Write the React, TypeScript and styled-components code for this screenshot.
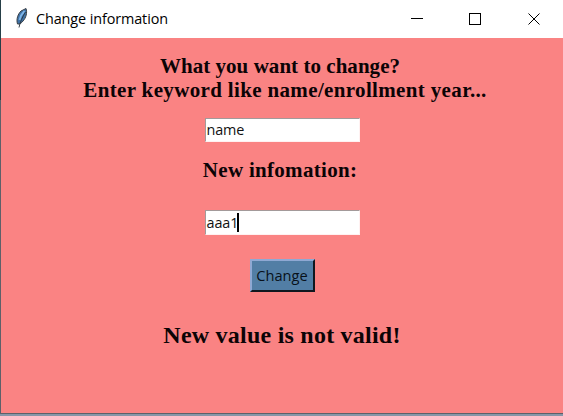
import React from "react";
import styled, { createGlobalStyle } from "styled-components";

const GlobalStyle = createGlobalStyle`
  * { box-sizing: border-box; }
  html, body { margin: 0; padding: 0; overflow: hidden; background: #8795a8; }
`;

const Window = styled.main`
  width: 563px;
  height: 414px;
  display: flex;
  flex-direction: column;
  border-left: 1px solid;
  border-image: linear-gradient(#263f48 0 101px, #5d6069 101px) 1;
  border-bottom: 1px solid #53545c;
`;

const TitleBar = styled.header`
  height: 38px;
  flex: none;
  display: flex;
  align-items: center;
  background: #fff;
  color: #000;
`;

const Feather = styled.svg`
  width: 14px;
  height: 22px;
  margin: 0 7px 2px 14px;
`;

const Title = styled.h1`
  flex: 1;
  margin: 0;
  font: 400 14.4px/20px "Open Sans", "Noto Sans", sans-serif;
  letter-spacing: -0.1px;
  white-space: nowrap;
`;

const WindowButton = styled.button`
  width: 58px;
  height: 38px;
  padding: 0;
  border: 0;
  background: transparent;
  display: flex;
  align-items: center;
  justify-content: center;

  svg { display: block; }
`;

const CloseButton = styled(WindowButton)`
  width: 59px;
  padding-left: 1px;
`;

const Form = styled.section`
  flex: 1;
  display: flex;
  flex-direction: column;
  align-items: center;
  padding-top: 16px;
  background: #fa8383;
  color: #0c0406;
`;

const Label = styled.div<{ $size?: number; $spacing: number; $gap?: number; $left?: number; $right?: number }>`
  font: 700 ${(p) => p.$size ?? 21}px/24px "Liberation Serif", "Times New Roman", serif;
  letter-spacing: ${(p) => p.$spacing}px;
  margin-bottom: ${(p) => p.$gap ?? 0}px;
  padding-left: ${(p) => p.$left ?? 0}px;
  padding-right: ${(p) => p.$right ?? 0}px;
  white-space: nowrap;
`;

const Entry = styled.div<{ $height: number; $gap: number }>`
  width: 155px;
  height: ${(p) => p.$height}px;
  margin-bottom: ${(p) => p.$gap}px;
  padding-left: 1px;
  display: flex;
  align-items: center;
  background: #fff;
  border: 1px solid;
  border-color: #a39a9a #fff1f1 #fff1f1 #a39a9a;
  color: #111;
  font: 400 14.4px/20px "Open Sans", "Noto Sans", sans-serif;
  letter-spacing: -0.1px;
`;

const Caret = styled.span`
  width: 2px;
  height: 19px;
  margin-left: -1px;
  background: #000;
`;

const ChangeButton = styled.button`
  width: 65px;
  height: 33px;
  margin: 0 0 31px 1px;
  padding: 0 1px 1px 0;
  background: #527ea5;
  border: 2px solid;
  border-color: #8fa8d3 #10171f #10171f #8fa8d3;
  color: #08111a;
  font: 400 14.6px/20px "Open Sans", "Noto Sans", sans-serif;
`;

export default function App() {
  return (
    <>
      <GlobalStyle />
      <Window>
        <TitleBar>
          <Feather viewBox="0 0 14 22" aria-hidden="true">
            <path d="M2.5 17C1 12 3 7 6 4l5-2.5c1.5 4 0 9.5-3 12.5-1.5 2-3 3-4 3z" fill="#3f72a6" stroke="#3a4046" strokeWidth="1" />
            <path d="M4.5 13C5.5 8.5 7.5 6 9.5 4" fill="none" stroke="#7db4e8" strokeWidth="1.8" />
            <path d="M4 20.5C5 15 7.5 10 10.5 5" fill="none" stroke="#26313b" strokeWidth="0.9" />
          </Feather>
          <Title>Change information</Title>
          <WindowButton aria-label="Minimize">
            <svg width="12" height="12" shapeRendering="crispEdges"><path d="M0 5.5h12" stroke="#000" /></svg>
          </WindowButton>
          <WindowButton aria-label="Maximize">
            <svg width="12" height="12" shapeRendering="crispEdges"><path d="M.5.5h11v11H.5z" fill="none" stroke="#000" /></svg>
          </WindowButton>
          <CloseButton aria-label="Close">
            <svg width="12" height="12"><path d="M.5.5l11 11M11.5.5l-11 11" stroke="#000" strokeWidth="1" /></svg>
          </CloseButton>
        </TitleBar>
        <Form>
          <Label $spacing={0.04} $right={4}>What you want to change?</Label>
          <Label $spacing={0.35} $gap={16} $left={6}>Enter keyword like name/enrollment year...</Label>
          <Entry $height={24} $gap={16}>name</Entry>
          <Label $spacing={0.3} $gap={28} $right={4}>New infomation:</Label>
          <Entry $height={25} $gap={24}>aaa1<Caret /></Entry>
          <ChangeButton>Change</ChangeButton>
          <Label $size={24} $spacing={0.23}>New value is not valid!</Label>
        </Form>
      </Window>
    </>
  );
}
